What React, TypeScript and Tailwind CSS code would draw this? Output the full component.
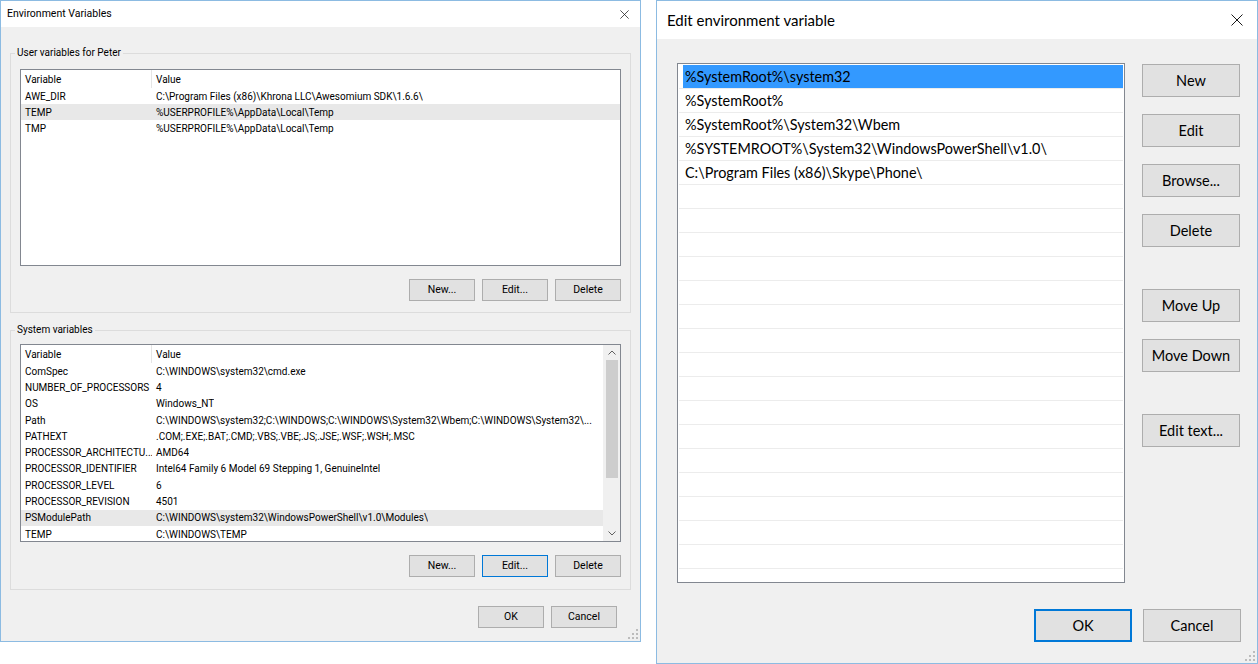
import React from 'react';

interface EnvVar {
  name: string;
  value: string;
  selected?: boolean;
}

const userVars: EnvVar[] = [
  { name: 'AWE_DIR', value: 'C:\\Program Files (x86)\\Khrona LLC\\Awesomium SDK\\1.6.6\\' },
  { name: 'TEMP', value: '%USERPROFILE%\\AppData\\Local\\Temp', selected: true },
  { name: 'TMP', value: '%USERPROFILE%\\AppData\\Local\\Temp' },
];

const systemVars: EnvVar[] = [
  { name: 'ComSpec', value: 'C:\\WINDOWS\\system32\\cmd.exe' },
  { name: 'NUMBER_OF_PROCESSORS', value: '4' },
  { name: 'OS', value: 'Windows_NT' },
  { name: 'Path', value: 'C:\\WINDOWS\\system32;C:\\WINDOWS;C:\\WINDOWS\\System32\\Wbem;C:\\WINDOWS\\System32\\...' },
  { name: 'PATHEXT', value: '.COM;.EXE;.BAT;.CMD;.VBS;.VBE;.JS;.JSE;.WSF;.WSH;.MSC' },
  { name: 'PROCESSOR_ARCHITECTU...', value: 'AMD64' },
  { name: 'PROCESSOR_IDENTIFIER', value: 'Intel64 Family 6 Model 69 Stepping 1, GenuineIntel' },
  { name: 'PROCESSOR_LEVEL', value: '6' },
  { name: 'PROCESSOR_REVISION', value: '4501' },
  { name: 'PSModulePath', value: 'C:\\WINDOWS\\system32\\WindowsPowerShell\\v1.0\\Modules\\', selected: true },
  { name: 'TEMP', value: 'C:\\WINDOWS\\TEMP' },
];

const pathEntries = [
  '%SystemRoot%\\system32',
  '%SystemRoot%',
  '%SystemRoot%\\System32\\Wbem',
  '%SYSTEMROOT%\\System32\\WindowsPowerShell\\v1.0\\',
  'C:\\Program Files (x86)\\Skype\\Phone\\',
];

const CloseIcon = ({ size }: { size: number }) => (
  <svg width={size} height={size} viewBox="0 0 12 12" className="shrink-0">
    <path d="M0.5 0.5 L11.5 11.5 M11.5 0.5 L0.5 11.5" stroke="#1a1a1a" strokeWidth="1" fill="none" />
  </svg>
);

const Grip = () => (
  <svg width="10" height="10" viewBox="0 0 10 10" className="absolute right-[2px] bottom-[2px]">
    <rect x="8" y="0" width="2" height="2" fill="#bcbcbc" />
    <rect x="4" y="4" width="2" height="2" fill="#bcbcbc" />
    <rect x="8" y="4" width="2" height="2" fill="#bcbcbc" />
    <rect x="0" y="8" width="2" height="2" fill="#bcbcbc" />
    <rect x="4" y="8" width="2" height="2" fill="#bcbcbc" />
    <rect x="8" y="8" width="2" height="2" fill="#bcbcbc" />
  </svg>
);

const SmallButton = ({ label, focused = false }: { label: string; focused?: boolean }) => (
  <button
    className={`w-[66px] h-[22px] bg-[#e1e1e1] border text-[10.5px] text-black flex items-center justify-center ${
      focused ? 'border-[#0078d7]' : 'border-[#adadad]'
    }`}
  >
    {label}
  </button>
);

const BigButton = ({ label, focused = false, className = '' }: { label: string; focused?: boolean; className?: string }) => (
  <button
    className={`w-[98px] h-[33px] bg-[#e1e1e1] text-[14.5px] text-black flex items-center justify-center ${
      focused ? 'border-2 border-[#0078d7]' : 'border border-[#adadad]'
    } ${className}`}
  >
    {label}
  </button>
);

const VarTable = ({ rows, rowHeight, scroll = false }: { rows: EnvVar[]; rowHeight: string; scroll?: boolean }) => (
  <div className="flex flex-1 min-w-0 overflow-hidden">
    <div className="flex-1 min-w-0 text-[10px] text-black">
      <div className="h-[18px] flex items-center">
        <div className="w-[131px] h-full pl-[4px] flex items-center border-r border-[#e5e5e5]">Variable</div>
        <div className="pl-[4px]">Value</div>
      </div>
      {rows.map((r) => (
        <div
          key={r.name}
          className={`${rowHeight} flex items-center whitespace-nowrap overflow-hidden ${r.selected ? 'bg-[#e8e8e8]' : ''}`}
        >
          <div className="w-[131px] shrink-0 pl-[4px] overflow-hidden">{r.name}</div>
          <div className="pl-[4px] min-w-0 overflow-hidden">{r.value}</div>
        </div>
      ))}
    </div>
    {scroll && (
      <div className="w-[17px] shrink-0 bg-[#f0f0f0] flex flex-col items-center">
        <div className="h-[15px] flex items-center justify-center">
          <svg width="8" height="5" viewBox="0 0 8 5">
            <path d="M0.5 4.5 L4 1 L7.5 4.5" stroke="#606060" strokeWidth="1" fill="none" />
          </svg>
        </div>
        <div className="w-[12px] h-[118px] bg-[#cdcdcd]" />
        <div className="flex-1" />
        <div className="h-[15px] flex items-center justify-center">
          <svg width="8" height="5" viewBox="0 0 8 5">
            <path d="M0.5 0.5 L4 4 L7.5 0.5" stroke="#606060" strokeWidth="1" fill="none" />
          </svg>
        </div>
      </div>
    )}
  </div>
);

const EnvironmentVariablesDialog = () => (
  <div className="relative w-[641px] h-[642px] shrink-0 border border-[#8cbbe2] bg-[#f0f0f0] flex flex-col font-['Roboto',sans-serif]">
    <div className="h-[26px] bg-white flex items-center justify-between pl-[6px] pr-[11px]">
      <span className="text-[10.5px] text-black">Environment Variables</span>
      <CloseIcon size={9} />
    </div>
    <div className="flex flex-col px-[9px]">
      <fieldset className="mt-[19px] min-w-0 border border-[#dcdcdc]">
        <legend className="ml-[4px] px-[2px] text-[10px] leading-[14px] text-black">User variables for Peter</legend>
        <div className="px-[9px] pt-[9px] pb-[11px]">
          <div className="h-[197px] border border-[#828790] bg-white flex">
            <VarTable rows={userVars} rowHeight="h-[16px]" />
          </div>
          <div className="flex justify-end gap-[7px] mt-[13px]">
            <SmallButton label="New..." />
            <SmallButton label="Edit..." />
            <SmallButton label="Delete" />
          </div>
        </div>
      </fieldset>
      <fieldset className="mt-[10px] min-w-0 border border-[#dcdcdc]">
        <legend className="ml-[4px] px-[2px] text-[10px] leading-[14px] text-black">System variables</legend>
        <div className="px-[9px] pt-[7px] pb-[12px]">
          <div className="h-[198px] border border-[#828790] bg-white flex">
            <VarTable rows={systemVars} rowHeight="h-[16.3px]" scroll />
          </div>
          <div className="flex justify-end gap-[7px] mt-[13px]">
            <SmallButton label="New..." />
            <SmallButton label="Edit..." focused />
            <SmallButton label="Delete" />
          </div>
        </div>
      </fieldset>
      <div className="flex justify-end gap-[7px] mt-[16px] pr-[14px]">
        <SmallButton label="OK" />
        <SmallButton label="Cancel" />
      </div>
    </div>
    <Grip />
  </div>
);

const EditVariableDialog = () => (
  <div className="relative ml-[15px] w-[602px] h-[664px] shrink-0 border border-[#8cbbe2] bg-[#f0f0f0] flex flex-col font-['Lato',sans-serif]">
    <div className="h-[38px] bg-white flex items-center justify-between pl-[10px] pr-[14px]">
      <span className="text-[15px] text-black">Edit environment variable</span>
      <CloseIcon size={12} />
    </div>
    <div className="flex pl-[20px] pr-[16px] pt-[24px]">
      <div className="w-[448px] h-[520px] border border-[#828790] bg-white pt-[1px] overflow-hidden">
        {Array.from({ length: 22 }).map((_, i) => {
          const text = pathEntries[i];
          const selected = i === 0;
          return (
            <div key={i} className="h-[24px] mx-[1px] border-b border-[#ececec] flex">
              <div
                className={`flex-1 ml-[4px] pl-[2px] flex items-center text-[14.4px] text-black whitespace-nowrap ${
                  selected ? 'bg-[#3399ff]' : ''
                }`}
              >
                {text}
              </div>
            </div>
          );
        })}
      </div>
      <div className="ml-[17px] mt-[1px] flex flex-col">
        <BigButton label="New" />
        <BigButton label="Edit" className="mt-[17px]" />
        <BigButton label="Browse..." className="mt-[17px]" />
        <BigButton label="Delete" className="mt-[17px]" />
        <BigButton label="Move Up" className="mt-[42px]" />
        <BigButton label="Move Down" className="mt-[17px]" />
        <BigButton label="Edit text..." className="mt-[42px]" />
      </div>
    </div>
    <div className="flex justify-end gap-[11px] mt-[26px] pr-[16px]">
      <BigButton label="OK" focused />
      <BigButton label="Cancel" />
    </div>
    <Grip />
  </div>
);

export default function App() {
  return (
    <div className="w-[1258px] h-[664px] bg-white flex items-start overflow-hidden">
      <EnvironmentVariablesDialog />
      <EditVariableDialog />
    </div>
  );
}
